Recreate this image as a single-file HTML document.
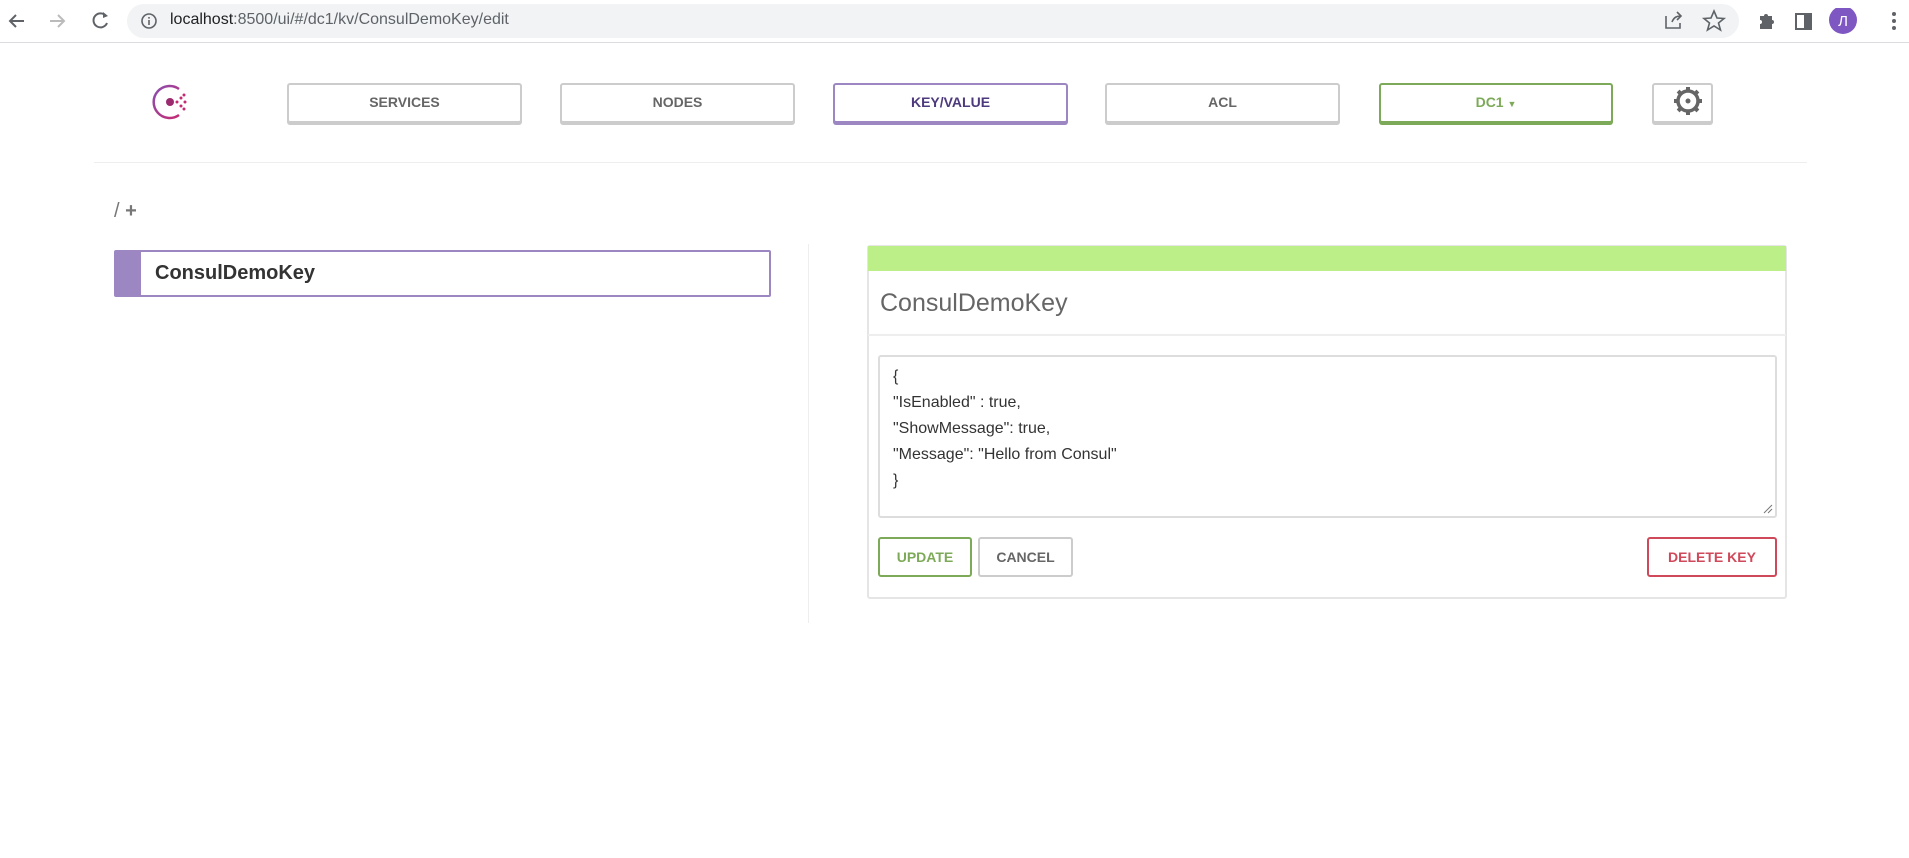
<!DOCTYPE html>
<html><head><meta charset="utf-8"><style>
*{box-sizing:border-box;margin:0;padding:0}
body{width:1909px;height:858px;background:#fff;font-family:"Liberation Sans",Arial,sans-serif;position:relative;overflow:hidden}
.a{position:absolute}
.bar{left:0;top:0;width:1909px;height:43px;background:#fff;border-bottom:1px solid #dadce0}
.url{left:127px;top:4px;width:1612px;height:34px;background:#f1f3f4;border-radius:17px}
.urltxt{left:170px;top:11px;font-size:16px;color:#202124}
.nb{position:absolute;top:83px;height:40px;border:2px solid #ccc;border-radius:3px;background:#fff;font-size:14px;font-weight:bold;color:#666;text-align:center;line-height:35px;box-shadow:0 2px 0 #ccc}
.btn{position:absolute;top:537px;height:40px;border:2px solid #ccc;border-radius:3px;font-size:14px;font-weight:bold;text-align:center;line-height:36px;background:#fff}
.code{font-size:16px;color:#333;line-height:26px}
</style></head><body>
<div class="a bar"></div>
<svg class="a" style="left:0;top:0" width="127" height="43">
<path d="M10 21h14M16 15l-6 6 6 6" stroke="#5f6368" stroke-width="2" fill="none"/>
<path d="M50 21h14M58 15l6 6-6 6" stroke="#bbb" stroke-width="2" fill="none"/>
<path d="M106 16a7 7 0 1 0 1 7" stroke="#5f6368" stroke-width="2" fill="none"/><path d="M103 12l5 4-5 2z" fill="#5f6368"/>
</svg>
<div class="a url"></div>
<svg class="a" style="left:140px;top:12px" width="18" height="18"><circle cx="9" cy="9" r="7" stroke="#5f6368" stroke-width="1.6" fill="none"/><rect x="8.2" y="8" width="1.6" height="5" fill="#5f6368"/><rect x="8.2" y="5" width="1.6" height="1.6" fill="#5f6368"/></svg>
<div class="a urltxt">localhost<span style="color:#5f6368">:8500/ui/#/dc1/kv/ConsulDemoKey/edit</span></div>
<svg class="a" style="left:1660px;top:8px" width="249" height="28">
<path d="M6 8v12h14v-5M12 14c2-5 5-6 9-6M17 4l4 4-4 4" stroke="#5f6368" stroke-width="1.6" fill="none"/>
<path d="M54 3l3 7 7 .5-5.5 4.5 2 7-6.5-4-6.5 4 2-7-5.5-4.5 7-.5z" stroke="#5f6368" stroke-width="1.6" fill="none"/>
<path d="M100 8h4a2 2 0 1 1 4 0h4v4a2 2 0 1 1 0 4v5h-12v-5a2 2 0 1 0 0-4z" fill="#5f6368"/>
<rect x="136" y="6" width="15" height="15" stroke="#5f6368" stroke-width="2" fill="none"/><rect x="144" y="6" width="7" height="15" fill="#5f6368"/>
<circle cx="183" cy="12" r="14" fill="#7e57c2"/><text x="183" y="18" font-size="15" fill="#fff" text-anchor="middle" font-family="Liberation Sans">Л</text>
<circle cx="234" cy="6" r="2" fill="#5f6368"/><circle cx="234" cy="13" r="2" fill="#5f6368"/><circle cx="234" cy="20" r="2" fill="#5f6368"/>
</svg>
<svg class="a" style="left:150px;top:82px" width="40" height="40">
<defs><linearGradient id="g" x1="0" y1="0" x2="1" y2="1"><stop offset="0" stop-color="#8a4fb0"/><stop offset="1" stop-color="#c62a71"/></linearGradient></defs>
<path d="M29 7A16 16 0 1 0 29 33" stroke="url(#g)" stroke-width="2.5" fill="none"/>
<circle cx="20" cy="20" r="4" fill="#9b2a6f"/><circle cx="27" cy="20" r="1.5" fill="#c62a71"/><circle cx="31" cy="16" r="1.5" fill="#c62a71"/><circle cx="31" cy="24" r="1.5" fill="#c62a71"/><circle cx="35" cy="20" r="1.5" fill="#c62a71"/><circle cx="34" cy="13" r="1.5" fill="#c62a71"/><circle cx="34" cy="27" r="1.5" fill="#c62a71"/>
</svg>
<div class="nb" style="left:287px;width:235px">SERVICES</div>
<div class="nb" style="left:560px;width:235px">NODES</div>
<div class="nb" style="left:833px;width:235px;border-color:#9c87c2;color:#4d3a7d;box-shadow:0 2px 0 #9c87c2">KEY/VALUE</div>
<div class="nb" style="left:1105px;width:235px">ACL</div>
<div class="nb" style="left:1379px;width:234px;border-color:#7daa59;color:#7daa59;box-shadow:0 2px 0 #7daa59">DC1 <span style="font-size:9px">▼</span></div>
<div class="nb" style="left:1652px;width:61px"></div>
<svg class="a" style="left:1669px;top:86px" width="38" height="30"><g transform="translate(19,15)"><circle r="10" stroke="#666" stroke-width="3.5" fill="none"/><circle r="2.5" fill="#666"/><g fill="#666"><rect x="-2" y="-14" width="4" height="5"/><rect x="-2" y="9" width="4" height="5"/><rect x="-14" y="-2" width="5" height="4"/><rect x="9" y="-2" width="5" height="4"/><g transform="rotate(45)"><rect x="-2" y="-14" width="4" height="5"/><rect x="-2" y="9" width="4" height="5"/><rect x="-14" y="-2" width="5" height="4"/><rect x="9" y="-2" width="5" height="4"/></g></g></g></svg>
<div class="a" style="left:94px;top:162px;width:1713px;height:1px;background:#eee"></div>
<div class="a" style="left:114px;top:200px;font-size:20px;color:#777">/ <b>+</b></div>
<div class="a" style="left:114px;top:250px;width:657px;height:47px;border:2px solid #9c87c2;border-radius:2px"></div>
<div class="a" style="left:116px;top:252px;width:25px;height:43px;background:#9c87c2"></div>
<div class="a" style="left:155px;top:262px;font-size:20px;font-weight:bold;color:#333">ConsulDemoKey</div>
<div class="a" style="left:808px;top:244px;width:1px;height:379px;background:#eee"></div>
<div class="a" style="left:867px;top:245px;width:920px;height:354px;border:2px solid #e5e5e5;border-radius:3px"></div>
<div class="a" style="left:868px;top:246px;width:918px;height:25px;background:#bdef89"></div>
<div class="a" style="left:880px;top:289px;font-size:25px;color:#666">ConsulDemoKey</div>
<div class="a" style="left:868px;top:334px;width:918px;height:2px;background:#eee"></div>
<div class="a" style="left:878px;top:355px;width:899px;height:163px;border:2px solid #ddd;border-radius:3px"></div>
<div class="a code" style="left:893px;top:364px">{<br>"IsEnabled" : true,<br>"ShowMessage": true,<br>"Message": "Hello from Consul"<br>}</div>
<svg class="a" style="left:1763px;top:504px" width="10" height="10"><path d="M1 9L9 1M5 9L9 5" stroke="#777"/></svg>
<div class="btn" style="left:878px;width:94px;border-color:#7daa59;color:#7daa59">UPDATE</div>
<div class="btn" style="left:978px;width:95px;color:#666">CANCEL</div>
<div class="btn" style="left:1647px;width:130px;border-color:#d0495b;color:#d0495b">DELETE KEY</div>
</body></html>
